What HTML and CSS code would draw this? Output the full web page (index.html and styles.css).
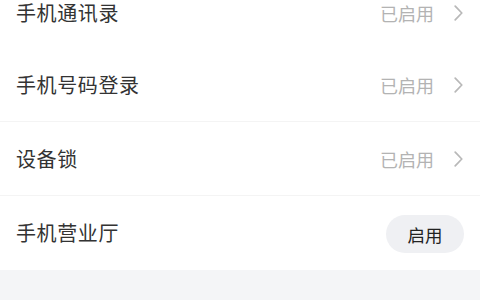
FILE: index.html
```html
<!DOCTYPE html>
<html lang="zh">
<head>
<meta charset="utf-8">
<link rel="stylesheet" href="styles.css">
</head>
<body>
<div class="list">
  <div class="row first">
    <span class="label">手机通讯录</span>
    <span class="right"><span class="status">已启用</span><svg class="chev" viewBox="0 0 9 16" width="9" height="16"><polyline points="1.2,1.2 7.8,8 1.2,14.8" fill="none" stroke="#b8b8b8" stroke-width="1.7" stroke-linecap="round" stroke-linejoin="round"/></svg></span>
  </div>
  <div class="row">
    <span class="label">手机号码登录</span>
    <span class="right"><span class="status">已启用</span><svg class="chev" viewBox="0 0 9 16" width="9" height="16"><polyline points="1.2,1.2 7.8,8 1.2,14.8" fill="none" stroke="#b8b8b8" stroke-width="1.7" stroke-linecap="round" stroke-linejoin="round"/></svg></span>
  </div>
  <div class="row">
    <span class="label">设备锁</span>
    <span class="right"><span class="status">已启用</span><svg class="chev" viewBox="0 0 9 16" width="9" height="16"><polyline points="1.2,1.2 7.8,8 1.2,14.8" fill="none" stroke="#b8b8b8" stroke-width="1.7" stroke-linecap="round" stroke-linejoin="round"/></svg></span>
  </div>
  <div class="row last">
    <span class="label">手机营业厅</span>
    <span class="btn">启用</span>
  </div>
</div>
<div class="footer"></div>
</body>
</html>
```
FILE: styles.css
```css
html, body {
  margin: 0;
  padding: 0;
  background: #f4f5f7;
  font-family: "Noto Sans CJK SC", "Noto Sans", sans-serif;
}
.list {
  background: #ffffff;
  margin-top: -23px;
}
.row {
  height: 73px;
  display: flex;
  align-items: center;
  justify-content: space-between;
  padding: 0 17px 0 16px;
  border-bottom: 1px solid #f4f4f4;
}
.row.first {
  height: 71px;
  border-bottom: none;
}
.row.last {
  height: 74px;
  border-bottom: none;
}
.label {
  font-size: 20px;
  line-height: 1;
  color: #333333;
  letter-spacing: 0.6px;
}
.right {
  display: flex;
  align-items: center;
  gap: 20px;
}
.status {
  font-size: 18px;
  line-height: 1;
  color: #b3b3b3;
}
.chev {
  display: block;
}
.btn {
  display: flex;
  align-items: center;
  justify-content: center;
  width: 78px;
  height: 38px;
  border-radius: 19px;
  background: #eff0f3;
  color: #222222;
  font-size: 17.5px;
  margin-top: 2px;
  margin-right: -1px;
}
.footer {
  height: 40px;
}
```
